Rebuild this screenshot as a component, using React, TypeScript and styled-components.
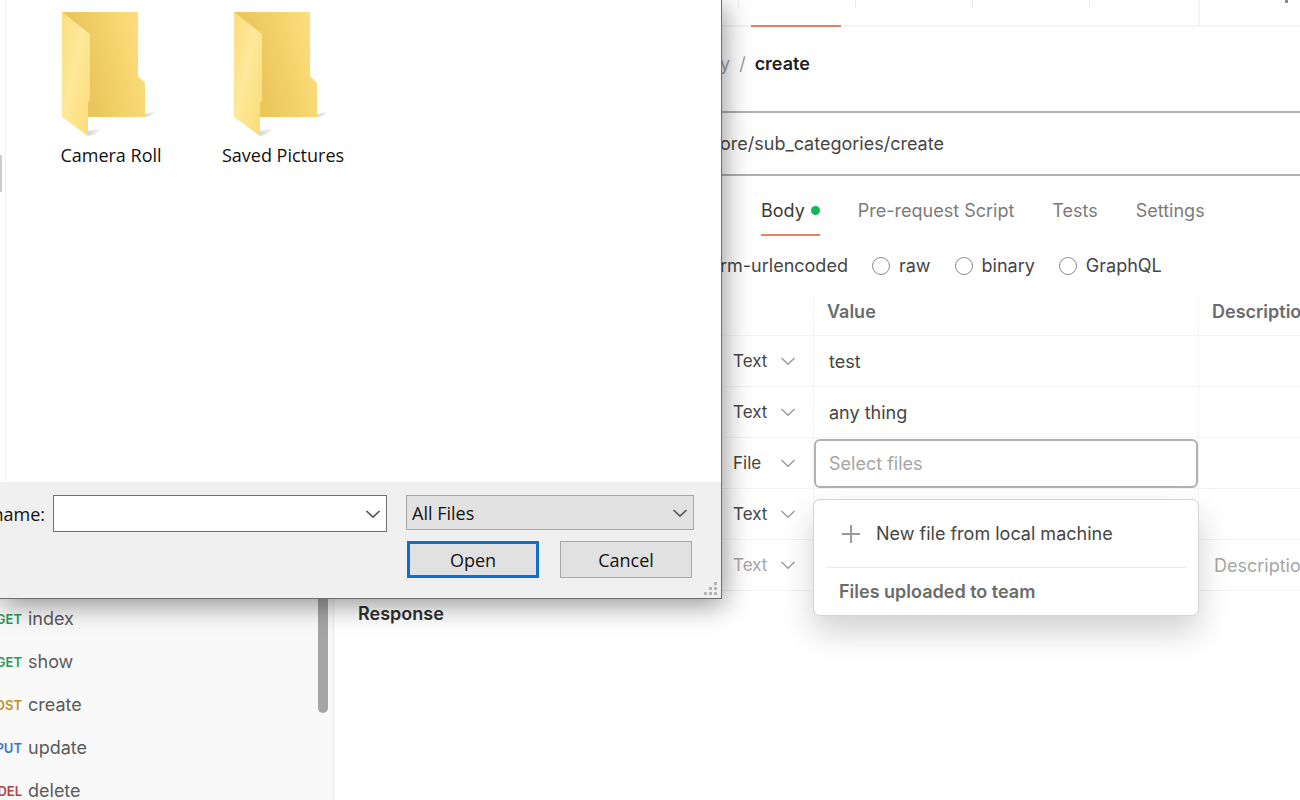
import React from "react";
import styled, { createGlobalStyle } from "styled-components";

const GlobalStyle = createGlobalStyle`
  *, *::before, *::after { box-sizing: border-box; }
  body {
    margin: 0;
    background: #ffffff;
    color: #454545;
    font: 18px/24px Inter, "Liberation Sans", sans-serif;
  }
  button, input, select { font: inherit; color: inherit; }
`;

const Shell = styled.div`
  position: relative;
  display: grid;
  grid-template-columns: 334px minmax(0, 1fr);
  height: 100vh;
  overflow: hidden;
`;

/* ---------- Sidebar ---------- */

const Sidebar = styled.aside`
  display: flex;
  justify-content: space-between;
  min-height: 0;
  overflow: hidden;
  background: #f9f9f9;
  border-right: 1px solid #ececec;
`;

const RequestList = styled.ul`
  margin: 0;
  padding: 597px 0 0;
  list-style: none;
`;

const RequestItem = styled.li`
  height: 43px;
`;

const RequestLink = styled.a`
  display: flex;
  align-items: center;
  gap: 6px;
  height: 100%;
  color: #5a5a5a;
  text-decoration: none;
`;

const Method = styled.span<{ $color: string }>`
  display: flex;
  justify-content: flex-end;
  width: 22px;
  color: ${(p) => p.$color};
  font-size: 13px;
  font-weight: 600;
`;

const ScrollThumb = styled.div`
  width: 10px;
  height: 713px;
  margin-right: 5px;
  border-radius: 5px;
  background: #a5a5a5;
`;

/* ---------- Request pane ---------- */

const Main = styled.main`
  min-width: 0;
`;

const RequestPane = styled.section`
  padding-left: 386px;
`;

const TabStrip = styled.div`
  display: flex;
  height: 27px;
  padding-left: 18px;
  border-bottom: 2px solid #f4f4f4;
`;

const StripTab = styled.div<{ $active?: boolean }>`
  display: flex;
  align-items: flex-end;
  width: 117px;
  height: 27px;
  padding-left: 13px;
  background: linear-gradient(#ececec, #ececec) 0 0 / 1px 8px no-repeat;

  &::after {
    content: "";
    width: 90px;
    height: 2px;
    background: ${(p) => (p.$active ? "#dd8262" : "transparent")};
  }
`;

const StripEnd = styled.div`
  flex: 1;
  height: 25px;
  margin-left: -8px;
  padding-left: 85px;
  border-left: 2px solid #f4f4f4;
`;

const StripMark = styled.div`
  width: 3px;
  height: 3px;
  background: #8a8a8a;
`;

const Breadcrumb = styled.nav`
  display: flex;
  align-items: center;
  gap: 9px;
  height: 74px;
  margin-bottom: 10px;
  color: #a0a0a0;
`;

const Current = styled.span`
  color: #212121;
  font-weight: 600;
`;

const UrlInput = styled.input`
  display: block;
  width: 100%;
  height: 65px;
  padding: 0;
  border: solid #b0b0b0;
  border-width: 2px 0;
  background: transparent;
  outline: none;
`;

const Tabs = styled.div`
  display: flex;
  gap: 38px;
  padding: 11px 0 0 41px;
`;

const Tab = styled.button<{ $active?: boolean }>`
  display: flex;
  align-items: center;
  gap: 6px;
  height: 49px;
  padding: 0;
  border: 0;
  border-bottom: 2px solid ${(p) => (p.$active ? "#f07f55" : "transparent")};
  background: none;
  color: ${(p) => (p.$active ? "#3a3a3a" : "#7b7b7b")};
`;

const Dot = styled.span`
  width: 9px;
  height: 9px;
  border-radius: 50%;
  background: #0cbb52;
`;

const BodyTypes = styled.div`
  display: flex;
  align-items: center;
  gap: 24px;
  height: 60px;
`;

const BodyType = styled.label`
  display: flex;
  align-items: center;
  gap: 9px;
`;

const Radio = styled.input`
  appearance: none;
  width: 18px;
  height: 18px;
  margin: 0;
  border: 1px solid #8c8c8c;
  border-radius: 50%;
  background: #ffffff;
`;

const Params = styled.table`
  width: 100%;
  table-layout: fixed;
  border-collapse: separate;
  border-spacing: 0;
`;

const HeadCell = styled.th<{ $width?: number }>`
  width: ${(p) => (p.$width ? `${p.$width}px` : "auto")};
  height: 40px;
  padding: 0 0 7px 13px;
  overflow: hidden;
  border-bottom: 1px solid #f4f4f4;
  color: #6b6b6b;
  font-weight: 600;
  text-align: left;

  & + & { border-left: 1px solid #f5f5f5; }
`;

const Cell = styled.td`
  position: relative;
  height: 51px;
  padding: 0;
  border-bottom: 1px solid #f4f4f4;

  & + & { border-left: 1px solid #f5f5f5; }
`;

const TypeField = styled.div<{ $muted?: boolean }>`
  display: flex;
  align-items: center;
  padding-left: 13px;
  color: ${(p) => (p.$muted ? "#a6a6a6" : "#454545")};
`;

const TypeSelect = styled.select`
  appearance: none;
  width: 47px;
  padding: 0;
  border: 0;
  background: none;
  font-size: 17px;
`;

const ValueInput = styled.input<{ $focused?: boolean }>`
  display: block;
  width: 100%;
  height: 49px;
  padding: 0;
  border: ${(p) => (p.$focused ? "2px solid #b0b0b0" : "0")};
  border-radius: 6px;
  padding-left: ${(p) => (p.$focused ? "13px" : "15px")};
  background: #ffffff;
  outline: none;

  &::placeholder { color: #a6a6a6; opacity: 1; }
`;

const FileMenu = styled.div`
  position: absolute;
  z-index: 2;
  top: 61px;
  left: -1px;
  right: -1px;
  height: 117px;
  border: 1px solid #d4d4d4;
  border-radius: 7px;
  background: #ffffff;
  box-shadow: 0 16px 32px rgba(0, 0, 0, 0.18);
`;

const MenuItem = styled.button`
  display: flex;
  align-items: center;
  gap: 15px;
  width: calc(100% - 24px);
  height: 68px;
  margin: 0 12px;
  padding: 0 15px;
  border: 0;
  border-bottom: 1px solid #e9e9e9;
  background: none;
`;

const MenuHeading = styled.div`
  padding: 12px 25px;
  color: #6b6b6b;
  font-weight: 600;
`;

const ResponseTitle = styled.h2`
  margin: 0;
  padding: 11px 24px;
  color: #303030;
  font-size: 18px;
  font-weight: 600;
`;

/* ---------- File dialog ---------- */

const Dialog = styled.section`
  position: absolute;
  z-index: 5;
  top: 0;
  left: 0;
  display: flex;
  flex-direction: column;
  width: 722px;
  height: 599px;
  border: solid #6e6e6e;
  border-width: 0 1px 1px 0;
  background: #ffffff;
  color: #111111;
  font-family: "Open Sans", "Noto Sans", sans-serif;
  box-shadow: 2px 6px 26px rgba(0, 0, 0, 0.42);
`;

const Browser = styled.div`
  display: flex;
  flex: 1;
`;

const NavPane = styled.div`
  width: 6px;
  padding-top: 155px;
  border-right: 1px solid #f1f1f1;
`;

const NavThumb = styled.div`
  width: 2px;
  height: 37px;
  background: #cdcdcd;
`;

const Folders = styled.div`
  display: flex;
  padding: 10px 0 0 19px;
`;

const Folder = styled.figure`
  display: flex;
  flex-direction: column;
  align-items: center;
  width: 172px;
  margin: 0;
  font-size: 18px;
`;

const Footer = styled.form`
  display: grid;
  grid-template-columns: 45px 334px 299px;
  column-gap: 8px;
  row-gap: 9px;
  align-content: start;
  height: 116px;
  padding-top: 13px;
  background: #f0f0f0;
`;

const NameLabel = styled.label`
  display: flex;
  align-items: center;
  justify-content: flex-end;
  white-space: nowrap;
`;

const Combo = styled.div<{ $filled?: boolean }>`
  display: flex;
  align-items: center;
  height: ${(p) => (p.$filled ? 35 : 37)}px;
  margin-left: ${(p) => (p.$filled ? 11 : 0)}px;
  padding-right: 5px;
  border: 1px solid ${(p) => (p.$filled ? "#a8a8a8" : "#6f6f6f")};
  background: ${(p) => (p.$filled ? "#e1e1e1" : "#ffffff")};
`;

const NameInput = styled.input`
  flex: 1;
  min-width: 0;
  border: 0;
  background: none;
  outline: none;
`;

const FilterSelect = styled.select`
  appearance: none;
  flex: 1;
  padding: 0 5px;
  border: 0;
  background: none;
  font-size: 18px;
`;

const Actions = styled.div`
  display: flex;
  grid-column: 3;
  gap: 21px;
  padding-left: 12px;
`;

const DialogButton = styled.button<{ $primary?: boolean }>`
  width: 132px;
  height: 37px;
  padding: 0;
  border: ${(p) => (p.$primary ? "3px solid #0f70cb" : "1px solid #a8a8a8")};
  background: #e1e1e1;
  font-size: 18px;
`;

const Grip = styled.svg`
  position: absolute;
  right: 4px;
  bottom: 3px;
`;

/* ---------- Icons ---------- */

const Chevron = ({ color = "#9a9a9a", width = 1.4 }: { color?: string; width?: number }) => (
  <svg width="16" height="16" viewBox="0 0 16 16" fill="none" aria-hidden="true">
    <path d="M1.5 5 L8 11.2 L14.5 5" stroke={color} strokeWidth={width} />
  </svg>
);

const Plus = () => (
  <svg width="20" height="20" viewBox="0 0 20 20" aria-hidden="true">
    <path d="M10 1 V19 M1 10 H19" stroke="#9a9a9a" strokeWidth="2" />
  </svg>
);

const FolderIcon = ({ id }: { id: string }) => (
  <svg width="100" height="133" viewBox="0 0 100 133" aria-hidden="true">
    <defs>
      <linearGradient id={`${id}-back`} x1="0" x2="1" y1="0.3" y2="0">
        <stop offset="0.2" stopColor="#ebc65d" />
        <stop offset="0.7" stopColor="#f8d873" />
        <stop offset="1" stopColor="#ffe083" />
      </linearGradient>
      <linearGradient id={`${id}-front`} x1="0" x2="1" y1="0" y2="1">
        <stop offset="0" stopColor="#fbdd80" />
        <stop offset="0.45" stopColor="#ffe899" />
        <stop offset="1" stopColor="#fadb77" />
      </linearGradient>
      <linearGradient id={`${id}-shade`} x1="0" x2="1" y1="0" y2="0">
        <stop offset="0" stopColor="#000000" stopOpacity="0.16" />
        <stop offset="1" stopColor="#000000" stopOpacity="0" />
      </linearGradient>
    </defs>
    <path d="M84 104 L96 101 L90 106 L84 107 Z" fill={`url(#${id}-shade)`} />
    <path d="M27 121 L42 118 L34 124 L27 126 Z" fill={`url(#${id}-shade)`} />
    <path d="M1 2 H77 V66 L84 73 V107 H27 V60 Z" fill={`url(#${id}-back)`} />
    <path d="M1 2 L29 24 V90 L27 93 V126 L1 107 Z" fill={`url(#${id}-front)`} />
  </svg>
);

/* ---------- Data ---------- */

const requests = [
  { method: "GET", name: "index", color: "#279a58" },
  { method: "GET", name: "show", color: "#279a58" },
  { method: "POST", name: "create", color: "#bd912c" },
  { method: "PUT", name: "update", color: "#3b76cd" },
  { method: "DEL", name: "delete", color: "#b1423b" },
];

const params = [
  { type: "Text", value: "test" },
  { type: "Text", value: "any thing" },
  { type: "File", value: "" },
  { type: "Text", value: "" },
  { type: "Text", value: "", draft: true },
];

export default function App() {
  return (
    <>
      <GlobalStyle />
      <Shell>
        <Sidebar>
          <RequestList>
            {requests.map((r) => (
              <RequestItem key={r.name}>
                <RequestLink href="#">
                  <Method $color={r.color}>{r.method}</Method>
                  {r.name}
                </RequestLink>
              </RequestItem>
            ))}
          </RequestList>
          <ScrollThumb />
        </Sidebar>

        <Main>
          <RequestPane>
            <TabStrip>
              <StripTab $active />
              <StripTab />
              <StripTab />
              <StripTab />
              <StripEnd>
                <StripMark />
              </StripEnd>
            </TabStrip>
            <Breadcrumb aria-label="Breadcrumb">
              <span>y</span>
              <span>/</span>
              <Current>create</Current>
            </Breadcrumb>
            <UrlInput aria-label="Request URL" defaultValue="ore/sub_categories/create" />
            <Tabs>
              <Tab $active>
                Body
                <Dot />
              </Tab>
              <Tab>Pre-request Script</Tab>
              <Tab>Tests</Tab>
              <Tab>Settings</Tab>
            </Tabs>
            <BodyTypes>
              <span>rm-urlencoded</span>
              {["raw", "binary", "GraphQL"].map((t) => (
                <BodyType key={t}>
                  <Radio type="radio" name="bodyType" />
                  {t}
                </BodyType>
              ))}
            </BodyTypes>
            <Params>
              <thead>
                <tr>
                  <HeadCell $width={93} />
                  <HeadCell $width={385}>Value</HeadCell>
                  <HeadCell>Description</HeadCell>
                </tr>
              </thead>
              <tbody>
                {params.map((p, i) => (
                  <tr key={i}>
                    <Cell>
                      <TypeField $muted={p.draft}>
                        <TypeSelect aria-label="Type" defaultValue={p.type}>
                          <option>Text</option>
                          <option>File</option>
                        </TypeSelect>
                        <Chevron />
                      </TypeField>
                    </Cell>
                    <Cell>
                      <ValueInput
                        aria-label="Value"
                        $focused={p.type === "File"}
                        placeholder={p.type === "File" ? "Select files" : undefined}
                        defaultValue={p.value}
                      />
                      {p.type === "File" && (
                        <FileMenu>
                          <MenuItem>
                            <Plus />
                            New file from local machine
                          </MenuItem>
                          <MenuHeading>Files uploaded to team</MenuHeading>
                        </FileMenu>
                      )}
                    </Cell>
                    <Cell>
                      <ValueInput aria-label="Description" placeholder={p.draft ? "Description" : undefined} />
                    </Cell>
                  </tr>
                ))}
              </tbody>
            </Params>
          </RequestPane>
          <ResponseTitle>Response</ResponseTitle>
        </Main>

        <Dialog role="dialog" aria-label="Open">
          <Browser>
            <NavPane>
              <NavThumb />
            </NavPane>
            <Folders>
              <Folder>
                <FolderIcon id="camera" />
                <figcaption>Camera Roll</figcaption>
              </Folder>
              <Folder>
                <FolderIcon id="saved" />
                <figcaption>Saved Pictures</figcaption>
              </Folder>
            </Folders>
          </Browser>
          <Footer>
            <NameLabel htmlFor="file-name">name:</NameLabel>
            <Combo>
              <NameInput id="file-name" />
              <Chevron color="#555555" width={1.7} />
            </Combo>
            <Combo $filled>
              <FilterSelect aria-label="File type">
                <option>All Files</option>
              </FilterSelect>
              <Chevron color="#555555" width={1.7} />
            </Combo>
            <Actions>
              <DialogButton type="button" $primary>
                Open
              </DialogButton>
              <DialogButton type="button">Cancel</DialogButton>
            </Actions>
          </Footer>
          <Grip width="13" height="13" viewBox="0 0 13 13" fill="#b4b4b4" aria-hidden="true">
            <path d="M10 0h3v3h-3zM10 5h3v3h-3zM10 10h3v3h-3zM5 5h3v3H5zM5 10h3v3H5zM0 10h3v3H0z" />
          </Grip>
        </Dialog>
      </Shell>
    </>
  );
}
